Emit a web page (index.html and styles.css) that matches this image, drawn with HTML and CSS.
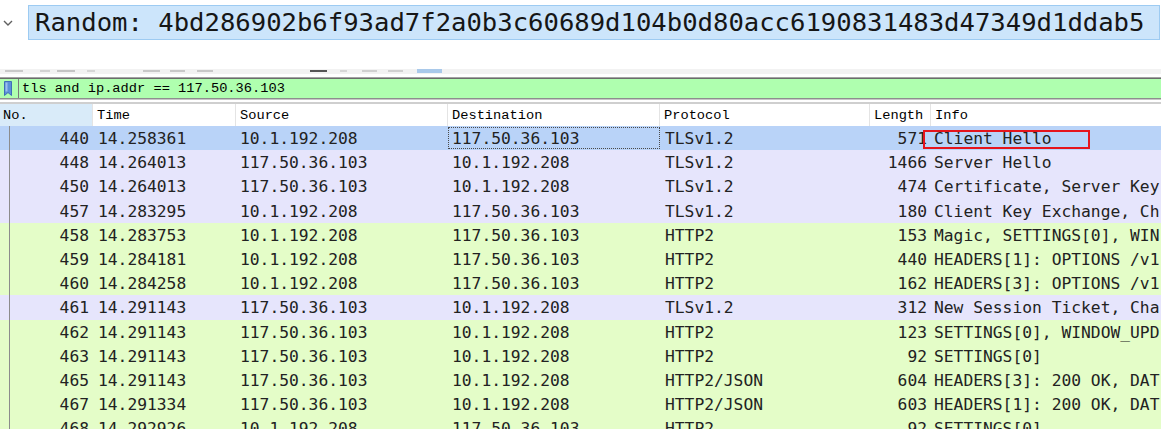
FILE: index.html
```html
<!DOCTYPE html>
<html lang="en">
<head>
    <meta charset="UTF-8">
    <title>Packet list</title>
    <link rel="stylesheet" href="styles.css">
</head>
<body>
    <div class="detail">
        <div class="chev">
            <svg width="10" height="6" viewBox="0 0 10 6"><polyline points="1,1 5,5 9,1" fill="none" stroke="#606060" stroke-width="1.4"/></svg>
        </div>
        <div class="random">Random: 4bd286902b6f93ad7f2a0b3c60689d104b0d80acc6190831483d47349d1ddab5</div>
    </div>

    <div class="toolbar"></div>

    <div class="filter">
        <div class="filter-inner">
            <span class="bookmark">
                <svg width="8" height="15" viewBox="0 0 8 15"><path d="M0.5 0.5 H7.5 V14.5 L4 11.5 L0.5 14.5 Z" fill="#5b8fd8" stroke="#3f6fb8" stroke-width="1"/><rect x="1.5" y="1.5" width="2" height="9" fill="#9cc0ee"/></svg>
            </span>
            <span class="filter-text">tls and ip.addr == 117.50.36.103</span>
        </div>
    </div>

    <div class="list">
        <div class="row head">
            <div class="cell no">No.</div>
            <div class="cell">Time</div>
            <div class="cell">Source</div>
            <div class="cell">Destination</div>
            <div class="cell">Protocol</div>
            <div class="cell">Length</div>
            <div class="cell">Info</div>
        </div>
        <div id="rows"></div>
    </div>

    <script>
        // packet rows: number, time, source, destination, protocol, length, info, colour class
        const packets = [
            ["440", "14.258361", "10.1.192.208", "117.50.36.103", "TLSv1.2", "571", "Client Hello", "sel"],
            ["448", "14.264013", "117.50.36.103", "10.1.192.208", "TLSv1.2", "1466", "Server Hello", "tls"],
            ["450", "14.264013", "117.50.36.103", "10.1.192.208", "TLSv1.2", "474", "Certificate, Server Key", "tls"],
            ["457", "14.283295", "10.1.192.208", "117.50.36.103", "TLSv1.2", "180", "Client Key Exchange, Ch", "tls"],
            ["458", "14.283753", "10.1.192.208", "117.50.36.103", "HTTP2", "153", "Magic, SETTINGS[0], WIN", "http"],
            ["459", "14.284181", "10.1.192.208", "117.50.36.103", "HTTP2", "440", "HEADERS[1]: OPTIONS /v1", "http"],
            ["460", "14.284258", "10.1.192.208", "117.50.36.103", "HTTP2", "162", "HEADERS[3]: OPTIONS /v1", "http"],
            ["461", "14.291143", "117.50.36.103", "10.1.192.208", "TLSv1.2", "312", "New Session Ticket, Cha", "tls"],
            ["462", "14.291143", "117.50.36.103", "10.1.192.208", "HTTP2", "123", "SETTINGS[0], WINDOW_UPD", "http"],
            ["463", "14.291143", "117.50.36.103", "10.1.192.208", "HTTP2", "92", "SETTINGS[0]", "http"],
            ["465", "14.291143", "117.50.36.103", "10.1.192.208", "HTTP2/JSON", "604", "HEADERS[3]: 200 OK, DAT", "http"],
            ["467", "14.291334", "117.50.36.103", "10.1.192.208", "HTTP2/JSON", "603", "HEADERS[1]: 200 OK, DAT", "http"],
            ["468", "14.292926", "10.1.192.208", "117.50.36.103", "HTTP2", "92", "SETTINGS[0]", "http"]
        ];

        const rows = document.getElementById("rows");
        packets.forEach(p => {
            const row = document.createElement("div");
            row.classList.add("row", "pkt", p[7]);
            const classes = ["no", "", "", "dst", "", "len", "info"];
            for (let i = 0; i < 7; i++) {
                const cell = document.createElement("div");
                cell.classList.add("cell");
                if (classes[i]) cell.classList.add(classes[i]);
                cell.textContent = p[i];
                row.appendChild(cell);
            }
            // red annotation box on the selected packet
            if (p[7] === "sel") {
                const mark = document.createElement("span");
                mark.classList.add("mark");
                row.appendChild(mark);
            }
            rows.appendChild(row);
        });
    </script>
</body>
</html>
```

FILE: styles.css
```css
body {
    margin: 0;
    background: #ffffff;
    width: 1164px;
    height: 429px;
    overflow: hidden;
}

/* packet detail line at the top */
.detail {
    display: flex;
    align-items: center;
    height: 35px;
    margin-top: 5px;
}
.chev {
    width: 28px;
    padding-left: 3px;
    box-sizing: border-box;
    display: flex;
    align-items: center;
}
.random {
    width: 1132px;
    height: 35px;
    box-sizing: border-box;
    border: 1px solid #9dcbf2;
    background: #cce5fb;
    padding-left: 6px;
    font-family: "DejaVu Sans Mono", monospace;
    font-size: 25.6px;
    line-height: 33px;
    color: #161616;
    white-space: nowrap;
    overflow: hidden;
}

/* bottom of the cut-off toolbar */
.toolbar {
    margin-top: 29px;
    height: 5px;
    width: 1161px;
    background:
        linear-gradient(#c9c9c9, #c9c9c9) 5px 1px / 18px 2px no-repeat,
        linear-gradient(#d2d2d2, #d2d2d2) 40px 1px / 10px 2px no-repeat,
        linear-gradient(#c4c4c4, #c4c4c4) 57px 1px / 18px 2px no-repeat,
        linear-gradient(#d6d6d6, #d6d6d6) 87px 1px / 8px 2px no-repeat,
        linear-gradient(#c8c8c8, #c8c8c8) 143px 1px / 17px 2px no-repeat,
        linear-gradient(#c8c8c8, #c8c8c8) 170px 1px / 15px 2px no-repeat,
        linear-gradient(#c8c8c8, #c8c8c8) 197px 1px / 16px 2px no-repeat,
        linear-gradient(#555555, #555555) 310px 1px / 17px 2px no-repeat,
        linear-gradient(#d6d6d6, #d6d6d6) 340px 1px / 7px 2px no-repeat,
        linear-gradient(#d0d0d0, #d0d0d0) 362px 1px / 15px 2px no-repeat,
        linear-gradient(#d0d0d0, #d0d0d0) 388px 1px / 15px 2px no-repeat,
        linear-gradient(#a9c9ea, #a9c9ea) 417px 0 / 25px 4px no-repeat,
        #f2f2f2;
}

/* display filter bar */
.filter {
    margin-top: 3px;
    width: 1161px;
    border-top: 1px solid #a3a3a3;
    border-bottom: 1px solid #c6c6c6;
}
.filter-inner {
    height: 19px;
    border-top: 1px solid #6c6c6c;
    border-bottom: 1px solid #8e8e8e;
    background: #afffaf;
    display: flex;
    align-items: center;
}
.bookmark {
    width: 19px;
    height: 19px;
    padding-left: 4px;
    border-right: 1px solid #7a7a7a;
    display: flex;
    align-items: center;
    box-sizing: border-box;
}
.filter-text {
    padding-left: 3px;
    font-family: "Liberation Mono", monospace;
    font-size: 13.7px;
    color: #000000;
}

/* packet list */
.list {
    width: 1161px;
    margin-top: 2px;
}
.row {
    display: grid;
    grid-template-columns: 93px 143px 212px 212px 210px 61px 230px;
}
.cell {
    padding: 0 4px;
    white-space: nowrap;
    overflow: hidden;
}
.head {
    height: 22px;
    border-top: 2px solid #cfcfcf;
    font-family: "Liberation Mono", monospace;
    font-size: 13.7px;
    line-height: 23px;
    color: #000000;
}
.head .cell {
    border-right: 1px solid #e4e4e4;
    padding-left: 4px;
}
.head .cell:first-child {
    padding-left: 3px;
}
.head .cell:last-child {
    border-right: none;
}
.head .no {
    background: #d9ebf9;
}

.pkt {
    position: relative;
    height: 24.2px;
    box-sizing: border-box;
    padding-top: 1px;
    line-height: 23.2px;
    font-family: "DejaVu Sans Mono", monospace;
    font-size: 16.3px;
    color: #222222;
}
.pkt .cell:nth-child(2) { padding-left: 5px; }
.pkt .cell:nth-child(5) { padding-left: 5px; }
.pkt .no {
    text-align: right;
    padding-right: 4px;
    margin-top: -1px;
    padding-top: 1px;
    background: linear-gradient(#8c8c8c, #8c8c8c) 9px 0 / 1px 100% no-repeat;
}
.pkt .len {
    text-align: right;
    padding-right: 4px;
    overflow: visible;
}
.pkt .info {
    padding-left: 3px;
}
.sel { background: #b9d3f8; }
.tls { background: #e6e5fc; }
.http { background: #e4fdc8; }

.sel .dst {
    border: 1px dotted #4a4a4a;
    padding-left: 3px;
    line-height: 21px;
    margin-bottom: 1px;
}
.mark {
    position: absolute;
    left: 923px;
    top: 4px;
    width: 167px;
    height: 19px;
    box-sizing: border-box;
    border: 2px solid #e5141c;
}
```
